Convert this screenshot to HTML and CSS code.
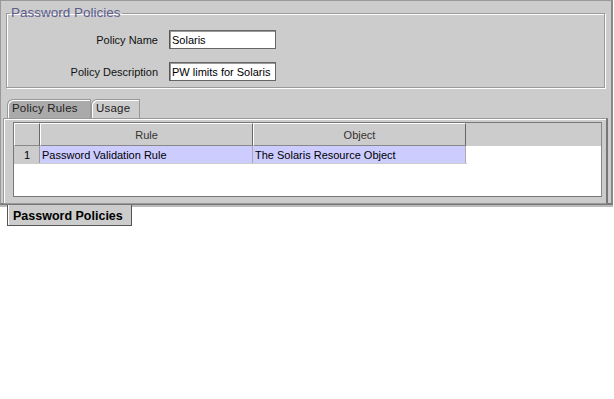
FILE: index.html
```html
<!DOCTYPE html>
<html lang="en">
<head>
  <meta charset="UTF-8" />
  <title>Password Policies</title>
  <link rel="stylesheet" href="styles.css">
</head>
<body>

  <div class="frame">

    <!-- Policy details -->
    <fieldset class="group">
      <legend>Password Policies</legend>
      <div class="form">
        <label for="policy-name">Policy Name</label>
        <input id="policy-name" class="field" type="text" value="Solaris">
        <label for="policy-desc">Policy Description</label>
        <input id="policy-desc" class="field" type="text" value="PW limits for Solaris">
      </div>
    </fieldset>

    <!-- Inner tabs -->
    <div class="tabs">
      <div class="tab selected">Policy Rules</div>
      <div class="tab">Usage</div>
    </div>

    <div class="tab-panel">
      <div class="grid">
        <div class="grid-head">
          <div class="cell num"></div>
          <div class="cell col">Rule</div>
          <div class="cell col">Object</div>
          <div class="cell filler"></div>
        </div>
        <div class="grid-row selected-row">
          <div class="cell num">1</div>
          <div class="cell val">Password Validation Rule</div>
          <div class="cell val">The Solaris Resource Object</div>
        </div>
      </div>
    </div>

  </div>

  <!-- Outer tabs -->
  <div class="bottom-tabs">
    <div class="bottom-tab">Password Policies</div>
  </div>

</body>
</html>
```

FILE: styles.css
```css
/* Base */
* {
  margin: 0;
  padding: 0;
  box-sizing: border-box;
}
body {
  background-color: #fff;
  font-family: "Liberation Sans", Arial, sans-serif;
  font-size: 11px;
  color: #000;
}
/* Grey window area */
.frame {
  width: 613px;
  height: 205px;
  background-color: #ccc;
  border-top: 1px solid #999;
  border-left: 1px solid #999;
  border-right: 2px solid #888;
  border-bottom: 2px solid #777;
  box-shadow: 0 2px 0 #bbb;
  padding: 0 3px 0 2px;
}
/* Titled group */
.group {
  margin: 4px 3px 0 3px;
  border: 1px solid #999;
  box-shadow: inset 1px 1px 0 #fff, 1px 1px 0 #fff;
  padding: 9px 0 3px 0;
  height: 83px;
}
.group legend {
  margin-left: 3px;
  padding: 0 1px;
  font-size: 13.5px;
  color: #5c5c8e;
  line-height: 16px;
}
.form {
  display: grid;
  grid-template-columns: 152px 107px;
  column-gap: 10px;
  row-gap: 13px;
  align-items: center;
}
.form label {
  text-align: right;
  padding-right: 1px;
  color: #111;
}
.field {
  height: 19px;
  border: 1px solid #666;
  border-left-color: #555;
  box-shadow: inset 1px 1px 0 #999;
  background-color: #fff;
  font-family: "Liberation Sans", Arial, sans-serif;
  font-size: 11px;
  padding: 0 2px;
  color: #000;
}
/* Tabs */
.tabs {
  display: flex;
  margin: 11px 0 0 4px;
  height: 19px;
}
.tab {
  height: 19px;
  padding: 2px 6px 0 4px;
  font-size: 11.5px;
  letter-spacing: 0.2px;
  color: #222;
  border: 1px solid #999;
  border-bottom: none;
  border-top-left-radius: 6px;
  box-shadow: inset 1px 1px 0 #fff;
  background-color: #ccc;
}
.tab.selected {
  width: 84px;
  background-color: #aaa;
}
.tab + .tab {
  width: 49px;
}
.tab-panel {
  height: 86px;
  border: 1px solid #999;
  border-right: 2px solid #777;
  box-shadow: inset 1px 1px 0 #fff;
  padding: 3px 4px 7px 9px;
}
/* Table */
.grid {
  height: 75px;
  background-color: #fff;
  border: 1px solid #777;
  border-right-color: #888;
}
.grid-head,
.grid-row {
  display: flex;
}
.grid-head {
  height: 23px;
  background-color: #ccc;
}
.grid-row {
  height: 18px;
  border-bottom: 1px solid #ccc;
  width: 453px;
}
.cell {
  display: flex;
  align-items: center;
  white-space: nowrap;
  overflow: hidden;
}
.grid-head .cell {
  border-top: 1px solid #fff;
  border-left: 1px solid #fff;
  border-right: 1px solid #666;
  border-bottom: 1px solid #888;
  justify-content: center;
  color: #333;
}
.grid-head .filler {
  flex: 1;
  border: none;
}
.cell.num {
  width: 26px;
  background-color: #ccc;
}
.grid-row .num {
  justify-content: flex-end;
  padding-right: 9px;
  border-right: 1px solid #999;
}
.cell.col {
  width: 213px;
}
.val {
  width: 213px;
  padding-left: 2px;
  background-color: #ccf;
  border-right: 1px solid #aaa;
}
/* Outer tab */
.bottom-tabs {
  display: flex;
  padding-left: 7px;
}
.bottom-tab {
  width: 125px;
  height: 21px;
  background-color: #ccc;
  border-left: 1px solid #555;
  border-right: 1px solid #555;
  border-bottom: 1px solid #555;
  box-shadow: inset 1px 0 0 #fff;
  font-weight: bold;
  font-size: 12.5px;
  padding: 4px 0 0 5px;
}
```
